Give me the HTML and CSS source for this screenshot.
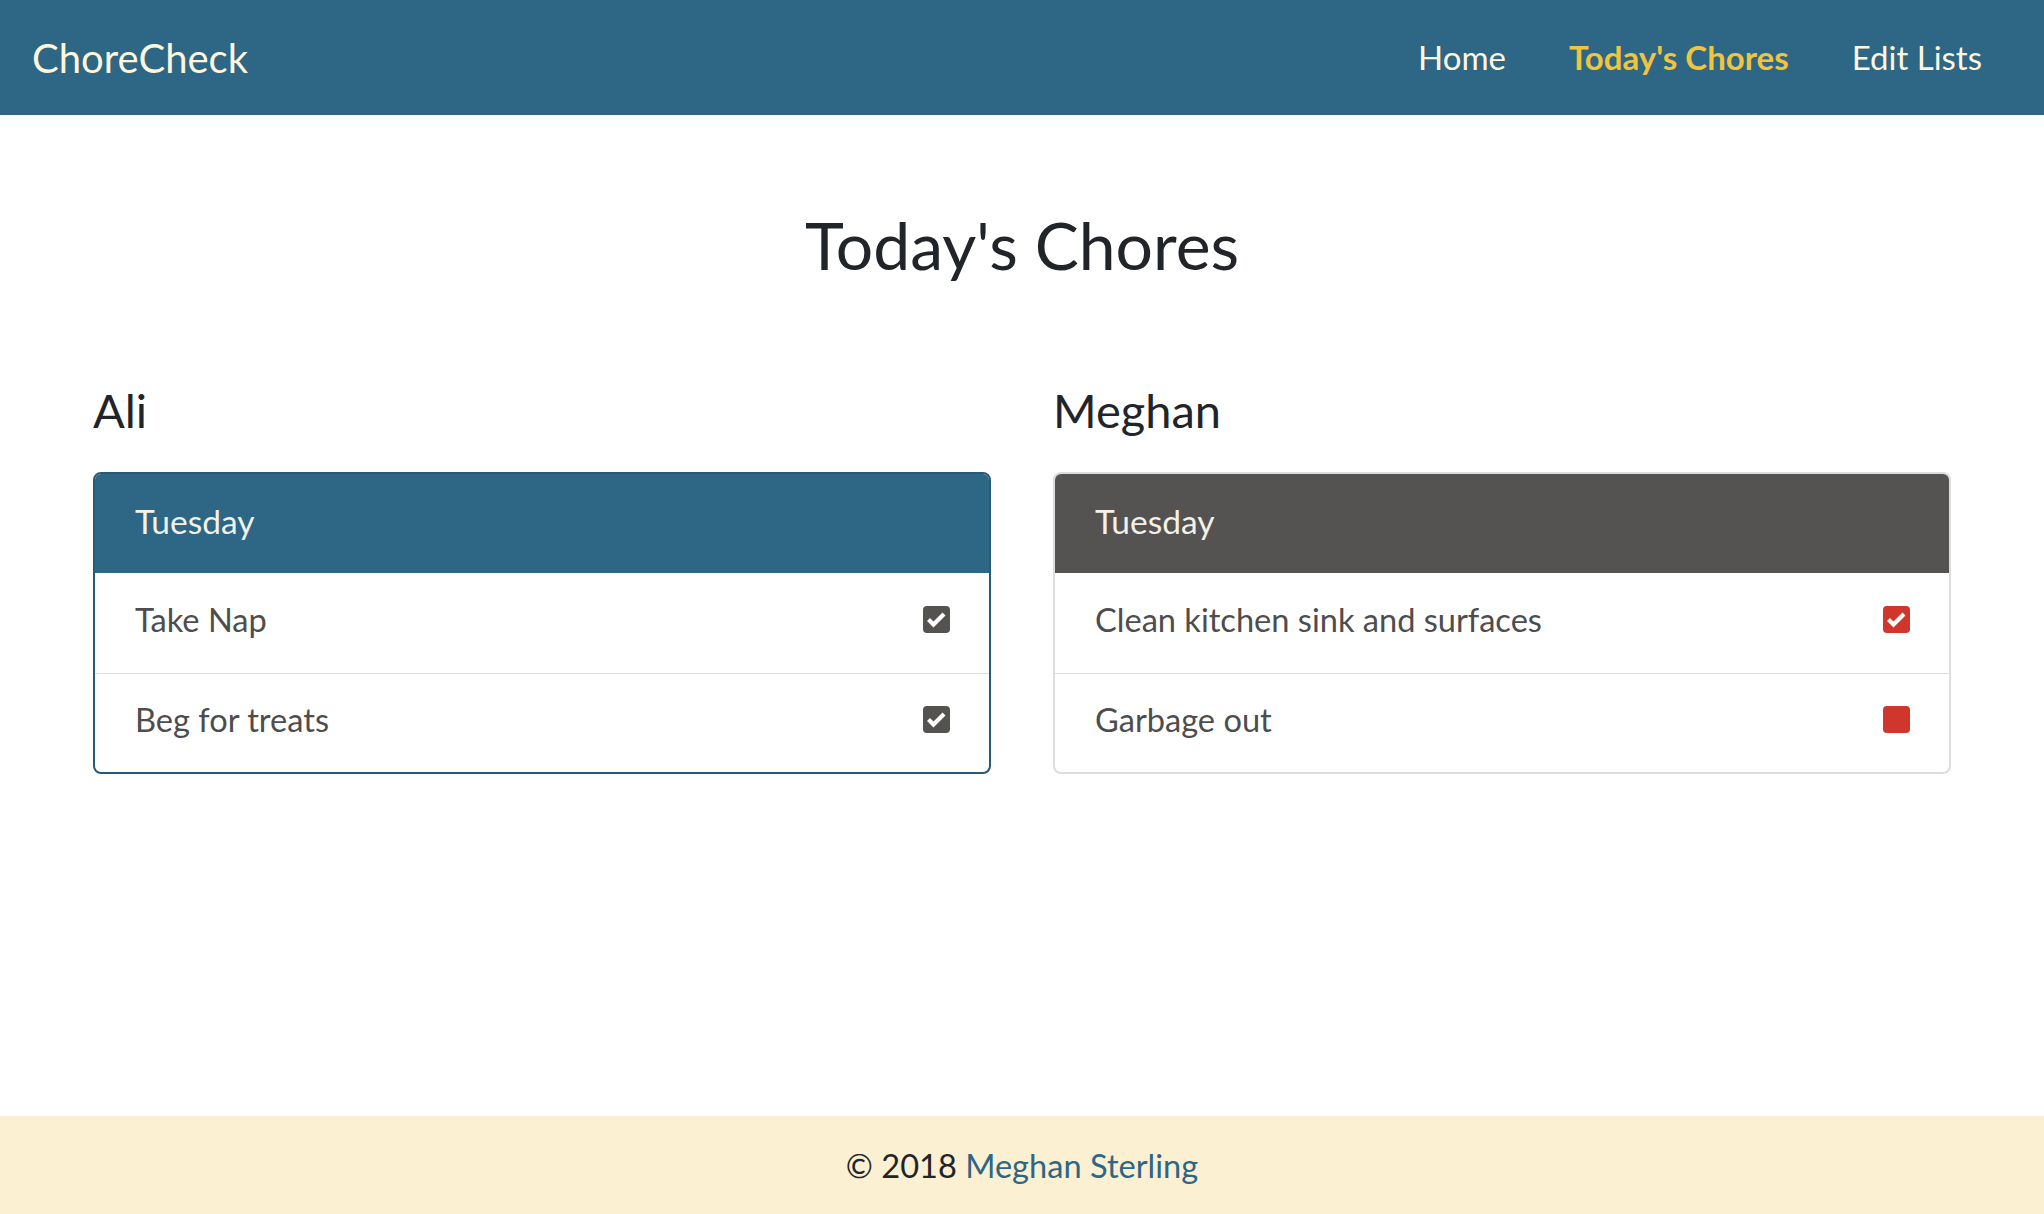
FILE: index.html
```html
<!DOCTYPE html>
<html lang="en">
<head>
<meta charset="utf-8">
<title>ChoreCheck</title>
<link rel="stylesheet" href="styles.css">
</head>
<body>
<header class="navbar">
  <a class="brand" href="#">ChoreCheck</a>
  <nav class="nav">
    <a class="nav-link" href="#">Home</a>
    <a class="nav-link active" href="#">Today's Chores</a>
    <a class="nav-link" href="#">Edit Lists</a>
  </nav>
</header>
<main class="main">
  <h1 class="title">Today's Chores</h1>
  <div class="columns">
    <section class="person">
      <h2 class="person-name">Ali</h2>
      <div class="card card-blue">
        <div class="card-header">Tuesday</div>
        <div class="row">
          <span>Take Nap</span>
          <svg class="box" viewBox="0 0 27 27" width="27" height="27"><rect width="27" height="27" rx="4" fill="#555350"/><path d="M5.5 13.5 L10.5 18.5 L21 8" fill="none" stroke="#fff" stroke-width="4.2"/></svg>
        </div>
        <div class="row">
          <span>Beg for treats</span>
          <svg class="box" viewBox="0 0 27 27" width="27" height="27"><rect width="27" height="27" rx="4" fill="#555350"/><path d="M5.5 13.5 L10.5 18.5 L21 8" fill="none" stroke="#fff" stroke-width="4.2"/></svg>
        </div>
      </div>
    </section>
    <section class="person">
      <h2 class="person-name">Meghan</h2>
      <div class="card card-gray">
        <div class="card-header">Tuesday</div>
        <div class="row">
          <span>Clean kitchen sink and surfaces</span>
          <svg class="box" viewBox="0 0 27 27" width="27" height="27"><rect width="27" height="27" rx="4" fill="#d0362b"/><path d="M5.5 13.5 L10.5 18.5 L21 8" fill="none" stroke="#fff" stroke-width="4.2"/></svg>
        </div>
        <div class="row">
          <span>Garbage out</span>
          <svg class="box" viewBox="0 0 27 27" width="27" height="27"><rect width="27" height="27" rx="4" fill="#d0362b"/></svg>
        </div>
      </div>
    </section>
  </div>
</main>
<footer class="footer">
  <p>© 2018 <a href="#">Meghan Sterling</a></p>
</footer>
</body>
</html>
```
FILE: styles.css
```css
* { box-sizing: border-box; }
html, body { margin: 0; padding: 0; }
body {
  font-family: Lato, "Noto Sans", "Liberation Sans", sans-serif;
  color: #212529;
  min-height: 100vh;
  display: flex;
  flex-direction: column;
  background: #fff;
}
a { text-decoration: none; }

.navbar {
  height: 115px;
  background: #2e6685;
  display: flex;
  align-items: center;
  justify-content: space-between;
  padding: 0 62px 0 32px;
}
.brand {
  color: #fdf5dc;
  font-size: 40px;
  line-height: 1;
}
.nav { display: flex; gap: 63px; }
.nav-link {
  color: #fdf5dc;
  font-size: 33px;
  line-height: 1;
}
.nav-link.active { color: #efc43e; font-weight: 700; }

.main { flex: 1; padding: 0 93px; }
.title {
  margin: 90px 0 0;
  text-align: center;
  font-weight: 400;
  font-size: 66px;
  line-height: 79px;
}
.columns {
  display: grid;
  grid-template-columns: 1fr 1fr;
  gap: 62px;
  margin-top: 99px;
}
.person-name {
  margin: 0 0 34px;
  font-weight: 400;
  font-size: 47px;
  line-height: 55px;
}
.card {
  border-radius: 8px;
  overflow: hidden;
  border: 2px solid #ddd;
}
.card-blue { border-color: #2a5976; }
.card-header {
  height: 99px;
  display: flex;
  align-items: center;
  padding: 0 40px 5px;
  font-size: 33.5px;
  color: #f4f1e8;
}
.card-blue .card-header { background: #2e6685; }
.card-gray .card-header { background: #555351; }
.row {
  height: 99.5px;
  display: flex;
  align-items: center;
  justify-content: space-between;
  padding: 0 39px 6px 40px;
  font-size: 32.6px;
  color: #4d4d4d;
  border-top: 1px solid #dedede;
}
.card-header + .row { border-top: 0; }
.box { display: block; }

.footer {
  height: 98px;
  background: #fcf0d3;
  display: flex;
  align-items: center;
  justify-content: center;
  font-size: 32.6px;
  color: #212529;
}
.footer p { margin: 0; }
.footer a { color: #2e6685; }
```
